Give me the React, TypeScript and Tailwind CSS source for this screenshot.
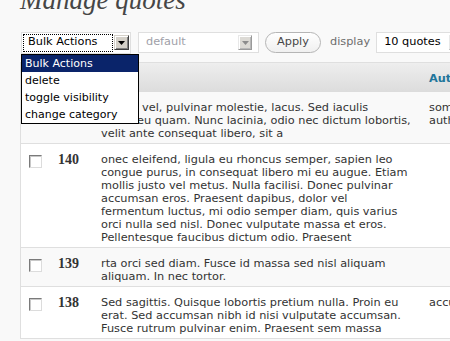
import React from "react";

type Row = {
  id: string;
  lines: string[];
  author: string[];
  alt: boolean;
};

const rows: Row[] = [
  {
    id: "141",
    lines: [
      "Mauris vel, pulvinar molestie, lacus. Sed iaculis",
      "lorem eu quam. Nunc lacinia, odio nec dictum lobortis,",
      "velit ante consequat libero, sit a",
    ],
    author: ["some", "author"],
    alt: true,
  },
  {
    id: "140",
    lines: [
      "onec eleifend, ligula eu rhoncus semper, sapien leo",
      "congue purus, in consequat libero mi eu augue. Etiam",
      "mollis justo vel metus. Nulla facilisi. Donec pulvinar",
      "accumsan eros. Praesent dapibus, dolor vel",
      "fermentum luctus, mi odio semper diam, quis varius",
      "orci nulla sed nisl. Donec vulputate massa et eros.",
      "Pellentesque faucibus dictum odio. Praesent",
    ],
    author: [],
    alt: false,
  },
  {
    id: "139",
    lines: ["rta orci sed diam. Fusce id massa sed nisl aliquam", "aliquam. In nec tortor."],
    author: [],
    alt: true,
  },
  {
    id: "138",
    lines: [
      "Sed sagittis. Quisque lobortis pretium nulla. Proin eu",
      "erat. Sed accumsan nibh id nisi vulputate accumsan.",
      "Fusce rutrum pulvinar enim. Praesent sem massa",
    ],
    author: ["accumsan"],
    alt: false,
  },
];

function Arrow({ active }: { active?: boolean }) {
  return (
    <span
      className={
        active
          ? "flex h-[15px] w-[15px] shrink-0 items-center justify-center border border-t-[#d4d0c8] border-l-[#d4d0c8] border-r-[#404040] border-b-[#404040] bg-[#d4d0c8] shadow-[inset_1px_1px_0_#fff,inset_-1px_-1px_0_#808080]"
          : "flex h-[15px] w-[14px] shrink-0 items-center justify-center border border-t-[#e8e8e8] border-l-[#e8e8e8] border-r-[#9a9a9a] border-b-[#9a9a9a] bg-[#dcdad5] shadow-[inset_1px_1px_0_#fff,inset_-1px_-1px_0_#b8b8b8]"
      }
    >
      <svg width="7" height="4" viewBox="0 0 7 4">
        <path d="M0 0h7L3.5 4z" fill={active ? "#000" : "#8c8c8c"} />
      </svg>
    </span>
  );
}

function Checkbox() {
  return (
    <span className="mt-[2px] block h-[13px] w-[13px] border border-t-[#7a7a7a] border-l-[#7a7a7a] border-r-[#dcdcdc] border-b-[#dcdcdc] bg-white shadow-[inset_1px_1px_0_#c8c8c8]" />
  );
}

export default function App() {
  return (
    <div className="relative h-[341px] w-[450px] overflow-hidden bg-[#f9f9f9] font-['DejaVu_Sans',Verdana,sans-serif] text-[11.3px] text-[#333]">
      <h2 className="-mt-[13px] whitespace-nowrap pl-[20px] font-['Liberation_Serif',serif] text-[27px] italic leading-[26px] text-[#464646]">
        Manage quotes
      </h2>

      {/* toolbar */}
      <div className="mt-[19px] flex h-[21px] w-[600px] items-center whitespace-nowrap pl-[21px]">
        <div className="flex h-[22px] w-[110px] shrink-0 items-center gap-[1px] border border-[#dfdfdf] bg-white p-[1px]">
          <div className="flex h-full flex-1 items-center border border-dotted border-black pl-[4px] text-black">
            Bulk Actions
          </div>
          <Arrow active />
        </div>
        <div className="ml-[7px] flex h-[21px] w-[121px] shrink-0 items-center justify-between border border-[#dfdfdf] bg-white pl-[7px] pr-[6px] text-[#a0a0a8]">
          default
          <Arrow />
        </div>
        <button className="ml-[6px] h-[21px] w-[56px] shrink-0 rounded-full border border-[#b5b5b5] bg-linear-to-b from-white to-[#f0f0f0] text-[11.3px] text-[#464646]">
          Apply
        </button>
        <span className="ml-[9px] shrink-0 text-[#6d6d6d]">display</span>
        <div className="ml-[6px] flex h-[21px] w-[90px] shrink-0 items-center justify-between border border-[#dfdfdf] bg-white pl-[7px] pr-[2px] text-black">
          10 quotes
          <Arrow />
        </div>
      </div>

      {/* table */}
      <div className="ml-[20px] mt-[9px] w-[600px] border-l border-t border-[#dfdfdf] bg-white">
        <div className="grid h-[29px] grid-cols-[29px_43px_328px_200px] items-center bg-linear-to-b from-[#eeeeee] to-[#dcdcdc]">
          <div />
          <div />
          <div />
          <div className="pl-[8px] pt-[3px] font-bold text-[#21759b]">Author</div>
        </div>
        {rows.map((r) => (
          <div
            key={r.id}
            className={`grid grid-cols-[29px_43px_328px_200px] border-b border-[#dfdfdf] pb-[3px] pt-[9px] ${
              r.alt ? "bg-[#f9f9f9]" : "bg-white"
            }`}
          >
            <div className="pl-[8px]">
              <Checkbox />
            </div>
            <div className="-mt-[1px] pl-[8px] font-['Liberation_Serif',serif] text-[14px] font-bold leading-[16px] text-[#333]">
              {r.id}
            </div>
            <div className="pl-[8px] leading-[13px]">
              {r.lines.map((l, i) => (
                <div key={i} className="whitespace-nowrap">
                  {l}
                </div>
              ))}
            </div>
            <div className="pl-[8px] leading-[13px]">
              {r.author.map((l, i) => (
                <div key={i} className="whitespace-nowrap">
                  {l}
                </div>
              ))}
            </div>
          </div>
        ))}
      </div>

      {/* open bulk actions list */}
      <ul className="absolute left-[21px] top-[54px] w-[118px] border border-black bg-white text-[11px] text-black">
        <li className="h-[17px] bg-[#0a246a] pl-[3px] leading-[17px] text-white">Bulk Actions</li>
        <li className="h-[17px] pl-[3px] leading-[17px]">delete</li>
        <li className="h-[17px] pl-[3px] leading-[17px]">toggle visibility</li>
        <li className="h-[17px] pl-[3px] leading-[17px]">change category</li>
      </ul>
    </div>
  );
}
